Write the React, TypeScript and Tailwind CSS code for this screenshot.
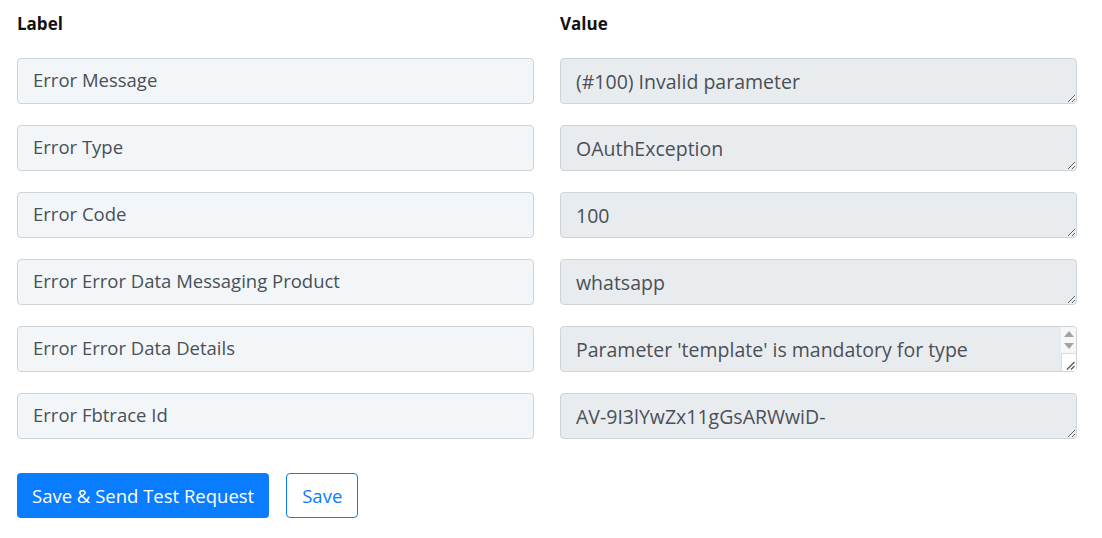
import React from "react";

type Row = { label: string; value: string; overflow?: boolean };

const rows: Row[] = [
  { label: "Error Message", value: "(#100) Invalid parameter" },
  { label: "Error Type", value: "OAuthException" },
  { label: "Error Code", value: "100" },
  { label: "Error Error Data Messaging Product", value: "whatsapp" },
  {
    label: "Error Error Data Details",
    value: "Parameter 'template' is mandatory for type 'template'",
    overflow: true,
  },
  { label: "Error Fbtrace Id", value: "AV-9I3lYwZx11gGsARWwiD-" },
];

// Classic vertical scrollbar with arrow buttons plus the resize corner
function ScrollbarOverlay() {
  return (
    <div className="pointer-events-none absolute right-[1px] top-[1px] bottom-[1px] w-[15px] flex flex-col bg-[#f7f7f7] rounded-tr-[3px]">
      <div className="flex-1 flex flex-col items-center justify-center gap-[6px]">
        <svg width="10" height="6" viewBox="0 0 10 6">
          <polygon points="0,6 5,0 10,6" fill="#a3a3a3" />
        </svg>
        <svg width="10" height="6" viewBox="0 0 10 6">
          <polygon points="0,0 10,0 5,6" fill="#a3a3a3" />
        </svg>
      </div>
      <div className="h-[18px] border-t border-l border-[#dcdcdc] bg-white flex items-end justify-end pr-[1px] pb-[1px] rounded-br-[3px]">
        <svg width="9" height="9" viewBox="0 0 9 9">
          <line x1="1" y1="8.5" x2="8.5" y2="1" stroke="#555" strokeWidth="1.2" />
          <line x1="5" y1="8.5" x2="8.5" y2="5" stroke="#555" strokeWidth="1.2" />
        </svg>
      </div>
    </div>
  );
}

export default function App() {
  return (
    <div
      className="bg-white w-[1102px] h-[538px] pl-[17px] pr-[25px] pt-[12px]"
      style={{ fontFamily: "'Open Sans', 'Noto Sans', sans-serif" }}
    >
      <div className="grid grid-cols-2 gap-x-[26px]">
        <div className="text-[17px] font-bold text-[#111] h-[24px] leading-[24px]">Label</div>
        <div className="text-[17px] font-bold text-[#111] h-[24px] leading-[24px]">Value</div>
      </div>
      <div className="mt-[22px] flex flex-col gap-[21px]">
        {rows.map((r) => (
          <div key={r.label} className="grid grid-cols-2 gap-x-[26px]">
            <input
              readOnly
              value={r.label}
              className="h-[46px] w-full rounded-[4px] border border-[#ced4da] bg-[#f3f6f9] px-[15px] pb-[3px] text-[18.5px] text-[#495057] outline-none"
            />
            <div className="relative h-[46px]">
              <textarea
                readOnly
                value={r.value}
                rows={1}
                className={
                  r.overflow
                    ? "block h-[46px] w-full overflow-hidden rounded-[4px] border border-[#ced4da] bg-[#e9ecef] pl-[15px] pr-[20px] pt-[8px] pb-[6px] text-[19.5px] leading-[30px] text-[#495057] outline-none"
                    : "block h-[46px] w-full overflow-hidden rounded-[4px] border border-[#ced4da] bg-[#e9ecef] px-[15px] pt-[8px] pb-[6px] text-[19.5px] leading-[30px] text-[#495057] outline-none"
                }
              />
              {r.overflow && <ScrollbarOverlay />}
            </div>
          </div>
        ))}
      </div>
      <div className="mt-[34px] flex gap-[17px]">
        <button className="h-[45px] px-[15px] rounded-[4px] bg-[#0a7cff] text-white text-[18.5px]">
          Save &amp; Send Test Request
        </button>
        <button className="h-[45px] px-[15px] rounded-[4px] border border-[#0a7cff] bg-white text-[#0a7cff] text-[18.5px]">
          Save
        </button>
      </div>
    </div>
  );
}
